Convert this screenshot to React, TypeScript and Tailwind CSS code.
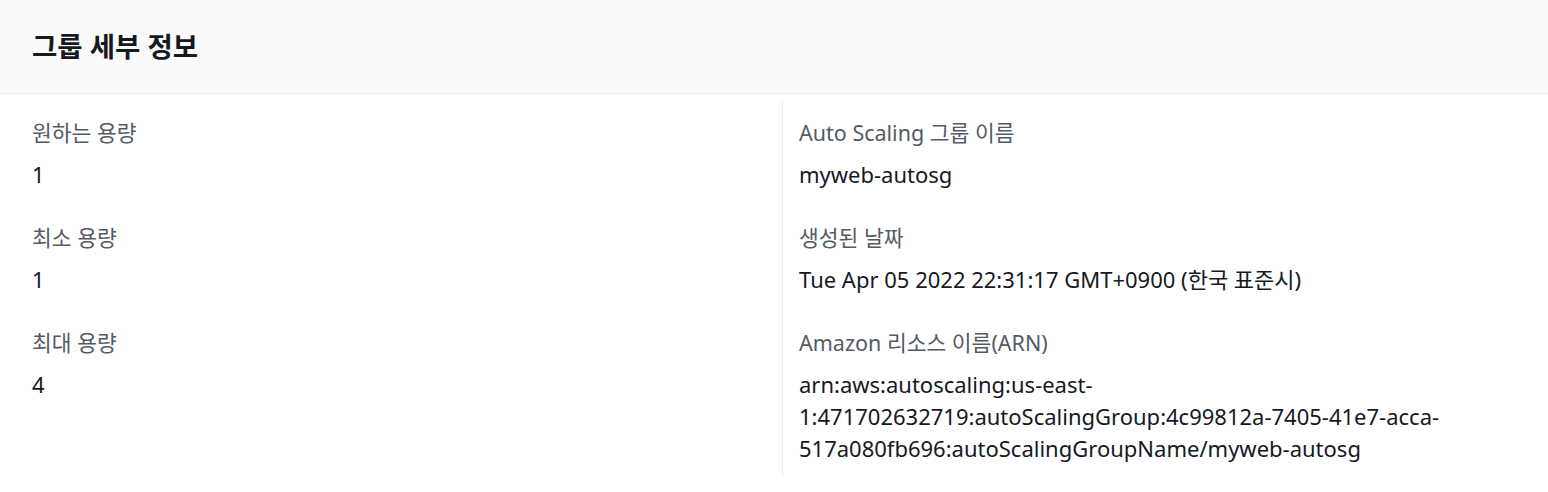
const font = { fontFamily: '"Noto Sans", "Noto Sans CJK KR", sans-serif' };

function Field({ label, children }: { label: string; children: React.ReactNode }) {
  return (
    <div className="mb-8 last:mb-0">
      <div className="text-[21.5px] leading-[32px] text-[#545b64]">{label}</div>
      <div className="mt-[9px] text-[22px] leading-[32px] text-[#16191f] break-all">{children}</div>
    </div>
  );
}

export default function App() {
  return (
    <div className="w-[1548px] h-[492px] bg-white overflow-hidden" style={font}>
      <div className="h-[94px] bg-[#fafafa] border-b border-[#eaeded] flex items-center px-8">
        <h2 className="text-[27.5px] font-bold text-[#16191f]">그룹 세부 정보</h2>
      </div>

      <div className="flex pt-2">
        <div className="w-[782px] pl-8 pt-[15px]">
          <Field label="원하는 용량">1</Field>
          <Field label="최소 용량">1</Field>
          <Field label="최대 용량">4</Field>
        </div>
        <div className="flex-1 border-l border-[#eaeded] pl-4 pr-8 pt-[15px] pb-[14px]">
          <Field label="Auto Scaling 그룹 이름">myweb-autosg</Field>
          <Field label="생성된 날짜">Tue Apr 05 2022 22:31:17 GMT+0900 (한국 표준시)</Field>
          <Field label="Amazon 리소스 이름(ARN)">
            <div className="w-[700px]">
              arn:aws:autoscaling:us-east-
              <br />
              1:471702632719:autoScalingGroup:4c99812a-7405-41e7-acca-
              <br />
              517a080fb696:autoScalingGroupName/myweb-autosg
            </div>
          </Field>
        </div>
      </div>
    </div>
  );
}
